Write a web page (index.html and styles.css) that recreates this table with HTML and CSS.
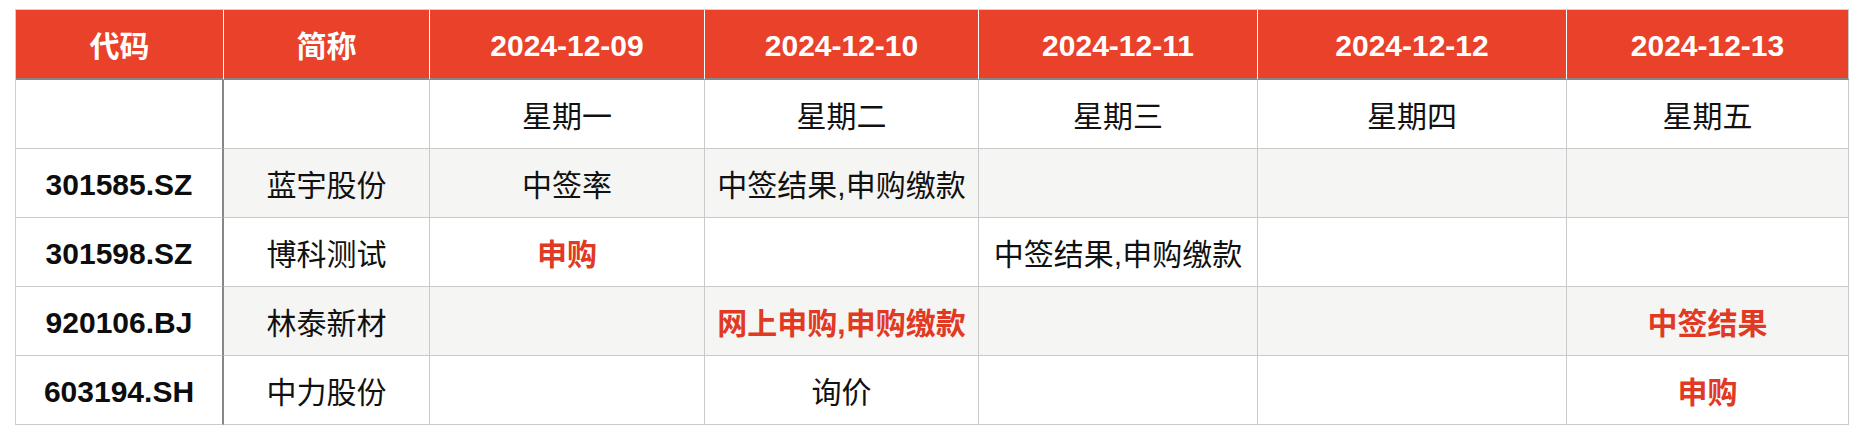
FILE: index.html
```html
<!DOCTYPE html>
<html lang="zh-CN">
<head>
<meta charset="utf-8">
<title>新股日历</title>
<link rel="stylesheet" href="styles.css">
</head>
<body>
<div class="wrap">
  <table class="cal">
    <colgroup>
      <col class="c-code">
      <col class="c-name">
      <col class="c-d1">
      <col class="c-d2">
      <col class="c-d3">
      <col class="c-d4">
      <col class="c-d5">
    </colgroup>
    <thead>
      <tr>
        <th class="frozen">代码</th>
        <th>简称</th>
        <th class="date">2024-12-09</th>
        <th class="date">2024-12-10</th>
        <th class="date">2024-12-11</th>
        <th class="date">2024-12-12</th>
        <th class="date">2024-12-13</th>
      </tr>
    </thead>
    <tbody>
      <tr>
        <td class="frozen"></td>
        <td></td>
        <td>星期一</td>
        <td>星期二</td>
        <td>星期三</td>
        <td>星期四</td>
        <td>星期五</td>
      </tr>
      <tr class="alt">
        <td class="frozen code">301585.SZ</td>
        <td>蓝宇股份</td>
        <td>中签率</td>
        <td>中签结果,申购缴款</td>
        <td></td>
        <td></td>
        <td></td>
      </tr>
      <tr>
        <td class="frozen code">301598.SZ</td>
        <td>博科测试</td>
        <td class="hot">申购</td>
        <td></td>
        <td>中签结果,申购缴款</td>
        <td></td>
        <td></td>
      </tr>
      <tr class="alt">
        <td class="frozen code">920106.BJ</td>
        <td>林泰新材</td>
        <td></td>
        <td class="hot">网上申购,申购缴款</td>
        <td></td>
        <td></td>
        <td class="hot">中签结果</td>
      </tr>
      <tr>
        <td class="frozen code">603194.SH</td>
        <td>中力股份</td>
        <td></td>
        <td>询价</td>
        <td></td>
        <td></td>
        <td class="hot">申购</td>
      </tr>
    </tbody>
  </table>
</div>
</body>
</html>
```
FILE: styles.css
```css
html, body {
  margin: 0;
  padding: 0;
  background: #ffffff;
}

.wrap {
  padding: 9px 0 0 15px;
}

.cal {
  table-layout: fixed;
  border-collapse: separate;
  border-spacing: 0;
  width: 1834px;
  border-top: 1px solid #cfcfcf;
  border-left: 1px solid #cfcfcf;
  font-family: "Liberation Sans", "Noto Sans CJK SC", sans-serif;
  font-size: 30px;
  color: #111111;
}

.c-code { width: 208px; }
.c-name { width: 206px; }
.c-d1 { width: 275px; }
.c-d2 { width: 274px; }
.c-d3 { width: 279px; }
.c-d4 { width: 309px; }
.c-d5 { width: 282px; }

.cal th,
.cal td {
  box-sizing: border-box;
  padding: 0 4px;
  text-align: center;
  vertical-align: middle;
  white-space: nowrap;
  overflow: hidden;
}

.cal th {
  height: 70px;
  background: #e9412a;
  color: #ffffff;
  font-weight: 700;
  border-right: 1px solid #ffffff;
  border-bottom: 2px solid #878787;
}

.cal th.date {
  padding-top: 4px;
}

.cal th:last-child {
  border-right: 1px solid #c9c9c9;
}

.cal td {
  height: 69px;
  background: #ffffff;
  border-right: 1px solid #cacaca;
  border-bottom: 1px solid #cacaca;
}

.cal tr.alt td {
  background: #f5f5f4;
}

.cal td.frozen,
.cal tr.alt td.frozen {
  background: #ffffff;
  border-right: 2px solid #8a8686;
}

.cal td.code {
  font-weight: 700;
  color: #0d0d0d;
  padding-top: 3px;
}

.cal td.hot {
  color: #e03a24;
  font-weight: 700;
}
```
